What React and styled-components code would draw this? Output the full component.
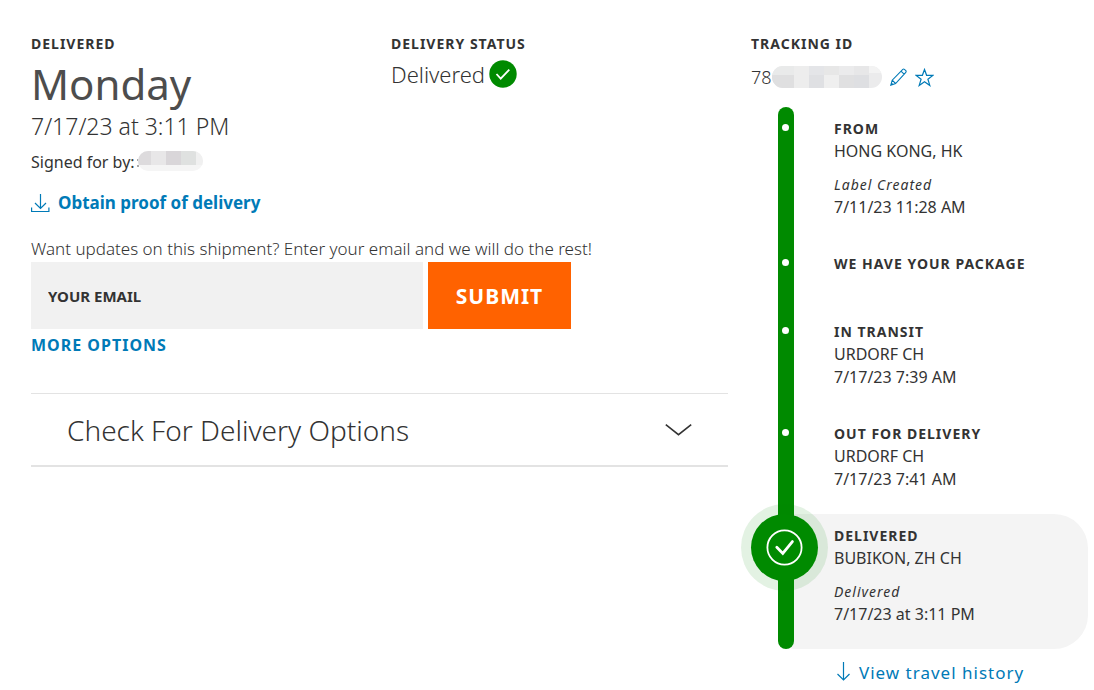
import React from "react";
import styled, { createGlobalStyle, css } from "styled-components";

const GlobalStyle = createGlobalStyle`
  *, *::before, *::after { box-sizing: border-box; }
  body {
    margin: 0;
    background: #fff;
    color: #333;
    font-family: "Noto Sans", "Open Sans", sans-serif;
    font-size: 16px;
    line-height: 23px;
  }
  h1, h2, h3, p, ol { margin: 0; padding: 0; }
`;

const Page = styled.div`
  display: grid;
  grid-template-columns: repeat(3, minmax(0, 1fr));
  column-gap: 23px;
  align-items: start;
  padding: 34px 6px 6px 31px;
`;

const Main = styled.main`
  grid-column: span 2;
`;

const Summary = styled.div`
  display: grid;
  grid-template-columns: repeat(2, minmax(0, 1fr));
  column-gap: 23px;
`;

const Label = styled.h2`
  font-size: 14px;
  line-height: 20px;
  font-weight: 700;
  letter-spacing: 1px;
  text-transform: uppercase;
`;

const Day = styled.p`
  color: #4d4d4d;
  font-size: 42px;
  line-height: 60px;
`;

const DateLine = styled.p`
  font-size: 23px;
  line-height: 24px;
  font-weight: 300;
`;

const Signed = styled.p`
  display: flex;
  align-items: center;
  gap: 2px;
  margin-top: 12px;
  line-height: 24px;
`;

const Status = styled.p`
  display: flex;
  align-items: center;
  gap: 4px;
  height: 40px;
  font-size: 22px;
  font-weight: 300;
`;

const Link = styled.a`
  display: inline-flex;
  align-items: center;
  gap: 8px;
  color: #007ab7;
  font-size: 17px;
  line-height: 24px;
  font-weight: ${(p) => (p.$strong ? 700 : 400)};
  text-decoration: none;
`;

const ProofRow = styled.p`
  display: flex;
  margin-top: 17px;
`;

const Updates = styled.label`
  display: block;
  margin-top: 21px;
  font-size: 17px;
  line-height: 26px;
  font-weight: 300;
`;

const EmailForm = styled.form`
  display: flex;
  gap: 5px;
  height: 67px;
  max-width: 540px;
`;

const EmailInput = styled.input`
  flex: 1;
  min-width: 0;
  border: 0;
  border-radius: 0;
  padding: 0 17px;
  background: #f1f1f1;
  color: #333;
  font: 700 15px "Noto Sans", sans-serif;
  &::placeholder { color: #333; opacity: 1; }
`;

const Submit = styled.button`
  width: 143px;
  border: 0;
  background: #ff6200;
  color: #fff;
  font: 700 21px "Noto Sans", sans-serif;
  letter-spacing: 1px;
`;

const MoreOptions = styled.a`
  display: inline-block;
  margin-top: 4px;
  color: #007ab7;
  font-size: 16px;
  line-height: 24px;
  font-weight: 700;
  letter-spacing: 1px;
  text-decoration: none;
`;

const Accordion = styled.section`
  margin-top: 36px;
  border-top: 1px solid #e3e3e3;
  border-bottom: 2px solid #e3e3e3;
`;

const AccordionButton = styled.button`
  display: flex;
  align-items: center;
  justify-content: space-between;
  width: 100%;
  height: 71px;
  padding: 0 36px;
  border: 0;
  background: none;
  color: #333;
  font: 300 28px "Noto Sans", sans-serif;
`;

const Tracking = styled.div`
  display: flex;
  align-items: center;
  height: 46px;
  font-size: 18px;
  font-weight: 300;
`;

const IconButton = styled.button`
  display: flex;
  margin-left: 8px;
  padding: 0;
  border: 0;
  background: none;
`;

const Timeline = styled.ol`
  margin-top: 7px;
  list-style: none;
`;

const Step = styled.li`
  display: flex;
  min-height: 68px;
`;

const Rail = styled.div`
  position: relative;
  z-index: 1;
  flex: none;
  width: 16px;
  margin-left: 27px;
  padding: 17px 4px 0;
  background: #008a00;
  ${(p) => p.$first && css`border-radius: 8px 8px 0 0;`}
  ${(p) => p.$last && css`border-radius: 0 0 8px 8px;`}
`;

const Dot = styled.span`
  display: block;
  width: 7px;
  height: 7px;
  border-radius: 50%;
  background: #fff;
`;

const Badge = styled.span`
  position: absolute;
  top: 0;
  left: -27px;
  display: flex;
  align-items: center;
  justify-content: center;
  width: 67px;
  height: 67px;
  border-radius: 50%;
  background: #008a00;
  &::before {
    content: "";
    position: absolute;
    inset: -10px;
    z-index: -1;
    border-radius: 50%;
    background: rgba(0, 138, 0, 0.11);
  }
`;

const StepBody = styled.div`
  flex: 1;
  margin-left: -8px;
  padding: 10px 0 23px 48px;
  ${(p) => p.$current && css`
    background: #f4f4f4;
    border-radius: 0 34px 34px 8px;
  `}
`;

const StepTitle = styled.h3`
  font-size: 14px;
  line-height: 23px;
  font-weight: 700;
  letter-spacing: 1px;
`;

const Note = styled.p`
  margin-top: 10px;
  font-size: 14px;
  font-style: italic;
  letter-spacing: 1px;
`;

const History = styled.p`
  display: flex;
  margin: 12px 0 0 85px;
  letter-spacing: 1px;
`;

const steps = [
  { title: "FROM", place: "HONG KONG, HK", note: "Label Created", time: "7/11/23 11:28 AM" },
  { title: "WE HAVE YOUR PACKAGE" },
  { title: "IN TRANSIT", place: "URDORF CH", time: "7/17/23 7:39 AM" },
  { title: "OUT FOR DELIVERY", place: "URDORF CH", time: "7/17/23 7:41 AM" },
  { title: "DELIVERED", place: "BUBIKON, ZH CH", note: "Delivered", time: "7/17/23 at 3:11 PM", current: true },
];

const NameMask = () => (
  <svg width="66" height="24" viewBox="0 0 66 24" aria-hidden="true">
    <clipPath id="nameClip"><rect x="1" y="1" width="65" height="20" rx="10" /></clipPath>
    <path d="M1 9v2M1 15v2" stroke="#555" />
    <g clipPath="url(#nameClip)">
      <rect width="66" height="24" fill="#f5f5f5" />
      <rect width="14" height="15" fill="#dddbdd" />
      <rect x="14" width="15" height="15" fill="#e8e7e8" />
      <rect x="29" width="15" height="15" fill="#d9d6d9" />
      <rect x="44" width="15" height="15" fill="#dfe1e0" />
      <rect x="59" width="7" height="15" fill="#f0f0f0" />
    </g>
  </svg>
);

const NumberMask = () => (
  <svg width="110" height="24" viewBox="0 0 110 24" aria-hidden="true">
    <clipPath id="numberClip"><rect y="1" width="110" height="22" rx="11" /></clipPath>
    <g clipPath="url(#numberClip)">
      <rect width="110" height="24" fill="#ebebec" />
      <rect width="22" height="10" fill="#e9eaea" />
      <rect y="10" width="22" height="14" fill="#dfdfe0" />
      <rect x="22" width="15" height="24" fill="#ededed" />
      <rect x="37" width="15" height="10" fill="#e4e5e8" />
      <rect x="37" y="10" width="15" height="14" fill="#dfe0e3" />
      <rect x="52" width="15" height="24" fill="#efefef" />
      <rect x="52" width="15" height="10" fill="#e7e7e7" />
      <rect x="67" y="10" width="15" height="14" fill="#e0e0e1" />
      <rect x="82" width="15" height="10" fill="#e7e7e8" />
      <rect x="82" y="10" width="15" height="14" fill="#dedfe2" />
      <rect x="97" width="13" height="8" fill="#f3f3f3" />
    </g>
  </svg>
);

const StatusCheck = () => (
  <svg width="28" height="28" viewBox="0 0 28 28" aria-hidden="true">
    <circle cx="14" cy="14" r="13.7" fill="#008a00" />
    <path d="M7.5 14l4.2 4.6 8.6-9" fill="none" stroke="#fff" strokeWidth="1.8" />
  </svg>
);

const BadgeCheck = () => (
  <svg width="37" height="37" viewBox="0 0 37 37" aria-hidden="true">
    <circle cx="18.5" cy="18.5" r="17.1" fill="none" stroke="#fff" strokeWidth="1.8" />
    <path d="M10.8 18.2l6 6.2 9.6-11.8" fill="none" stroke="#fff" strokeWidth="2.8" strokeLinecap="round" />
  </svg>
);

const DownloadIcon = () => (
  <svg width="19" height="20" viewBox="0 0 19 20" fill="none" stroke="#007ab7" aria-hidden="true">
    <path d="M9.5 1v14M4 10l5.5 5.5L15 10M.6 14.5v4h17.3v-4" strokeWidth="1.2" />
  </svg>
);

const ArrowIcon = () => (
  <svg width="15" height="24" viewBox="0 0 15 24" fill="none" stroke="#007ab7" aria-hidden="true">
    <path d="M7.5 1v18M1.5 13l6 6 6-6" strokeWidth="1.2" />
  </svg>
);

const PencilIcon = () => (
  <svg width="17" height="18" viewBox="0 0 17 18" fill="none" stroke="#007ab7" strokeWidth="1.1" aria-hidden="true">
    <path d="M.8 17.2l1.4-5L12.8 1.4q.8-.7 1.6 0l1.4 1.3q.7.8 0 1.6L5.6 15.5zM2.2 12.2l3.4 3.3M11 3.2l3.1 3M.8 17.2l1.8-1.7" />
  </svg>
);

const StarIcon = () => (
  <svg width="19" height="19" viewBox="0 0 19 19" fill="none" stroke="#007ab7" strokeWidth="1.2" aria-hidden="true">
    <path d="M9.5 1.5l2.1 5.8 6.2.1-4.9 3.8 1.9 6.2-5.3-3.7-5.3 3.7 1.9-6.2-4.9-3.8 6.2-.1z" />
  </svg>
);

const Chevron = () => (
  <svg width="27" height="12" viewBox="0 0 27 12" aria-hidden="true">
    <path d="M.8.7l12.7 10L26.2.7" fill="none" stroke="#333" strokeWidth="1.6" />
  </svg>
);

export default function App() {
  return (
    <>
      <GlobalStyle />
      <Page>
        <Main>
          <Summary>
            <div>
              <Label>Delivered</Label>
              <Day>Monday</Day>
              <DateLine>7/17/23 at 3:11 PM</DateLine>
              <Signed>Signed for by: <NameMask /></Signed>
            </div>
            <div>
              <Label>Delivery status</Label>
              <Status>Delivered <StatusCheck /></Status>
            </div>
          </Summary>
          <ProofRow>
            <Link $strong href="#proof"><DownloadIcon />Obtain proof of delivery</Link>
          </ProofRow>
          <Updates htmlFor="email">
            Want updates on this shipment? Enter your email and we will do the rest!
          </Updates>
          <EmailForm onSubmit={(e) => e.preventDefault()}>
            <EmailInput id="email" type="email" placeholder="YOUR EMAIL" />
            <Submit type="submit">SUBMIT</Submit>
          </EmailForm>
          <MoreOptions href="#options">MORE OPTIONS</MoreOptions>
          <Accordion>
            <AccordionButton type="button" aria-expanded="false">
              Check For Delivery Options
              <Chevron />
            </AccordionButton>
          </Accordion>
        </Main>
        <aside>
          <Label>Tracking ID</Label>
          <Tracking>
            78<NumberMask />
            <IconButton type="button" aria-label="Edit nickname"><PencilIcon /></IconButton>
            <IconButton type="button" aria-label="Add to watch list"><StarIcon /></IconButton>
          </Tracking>
          <Timeline>
            {steps.map((step, i) => (
              <Step key={step.title}>
                <Rail $first={i === 0} $last={i === steps.length - 1}>
                  {step.current ? <Badge><BadgeCheck /></Badge> : <Dot />}
                </Rail>
                <StepBody $current={step.current}>
                  <StepTitle>{step.title}</StepTitle>
                  {step.place && <p>{step.place}</p>}
                  {step.note && <Note>{step.note}</Note>}
                  {step.time && <p>{step.time}</p>}
                </StepBody>
              </Step>
            ))}
          </Timeline>
          <History>
            <Link href="#history"><ArrowIcon />View travel history</Link>
          </History>
        </aside>
      </Page>
    </>
  );
}
